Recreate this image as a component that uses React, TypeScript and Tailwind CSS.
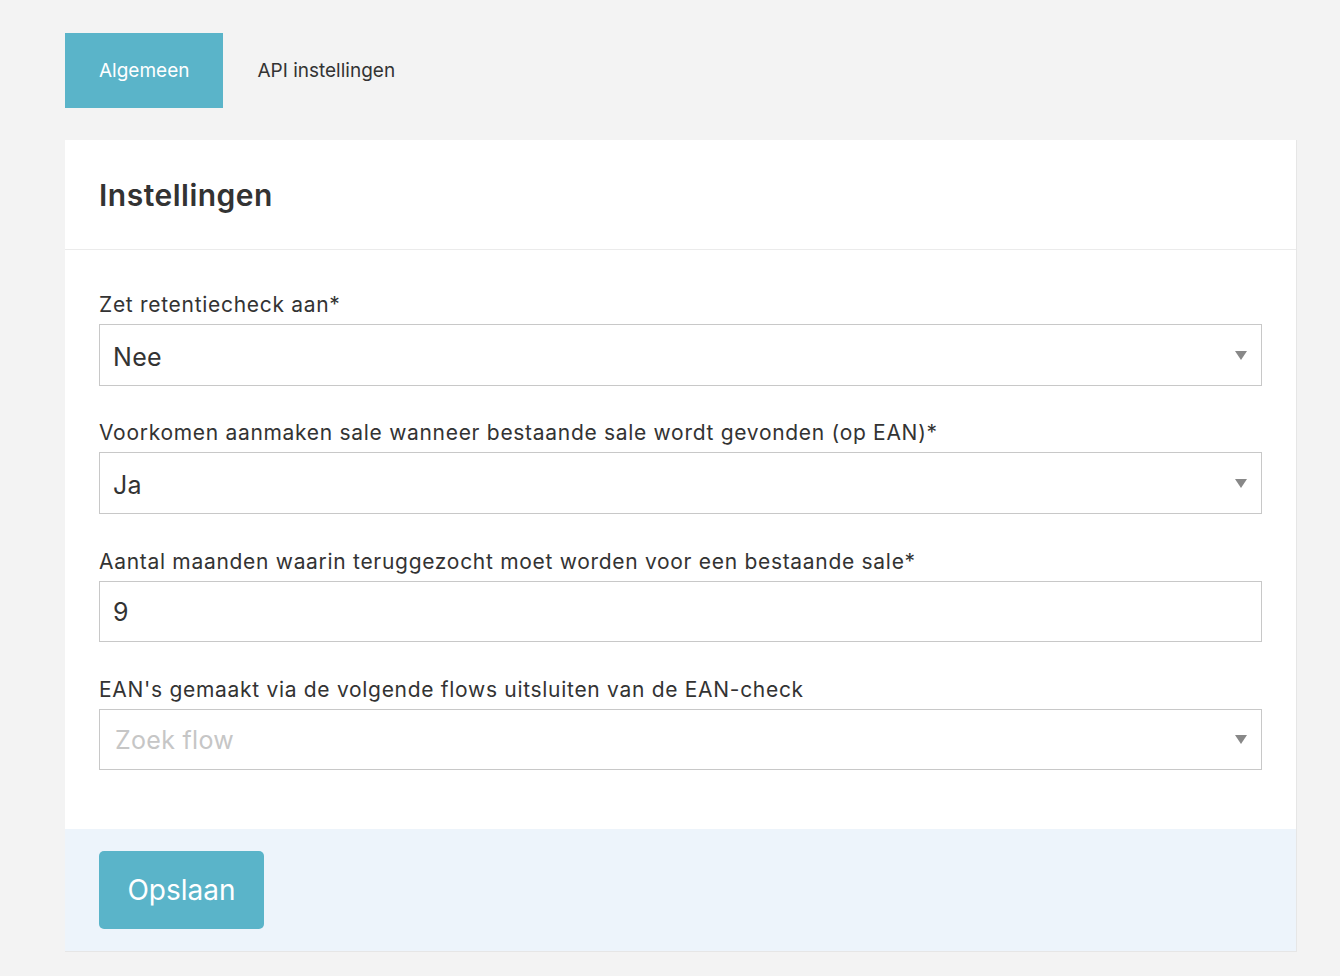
import { useState } from 'react'

const font = { fontFamily: 'Inter, "Noto Sans", sans-serif' }

function Caret() {
  return (
    <svg width="12" height="9" viewBox="0 0 12 9" className="shrink-0">
      <path d="M0 0 L12 0 L6 9 Z" fill="#888888" />
    </svg>
  )
}

function Field({ label, children }: { label: string; children: React.ReactNode }) {
  return (
    <div>
      <label className="block text-[21px] tracking-[0.7px] leading-[28px] text-[#333333] pt-[1px] mb-[5px]">{label}</label>
      {children}
    </div>
  )
}

function SelectBox({ value, placeholder, short = false }: { value?: string; placeholder?: string; short?: boolean }) {
  return (
    <div
      className={`${short ? 'h-[61px]' : 'h-[62px]'} border border-[#c8c8c8] bg-white flex items-center justify-between pl-[13px] pr-[14px]`}
    >
      {value ? (
        <span className="text-[25px] tracking-[0.3px] text-[#333333] pt-[5px]">{value}</span>
      ) : (
        <span className="text-[25px] tracking-[0.3px] text-[#c6c6c6] pl-[2px] pt-[3px]">{placeholder}</span>
      )}
      <Caret />
    </div>
  )
}

export default function App() {
  const [tab, setTab] = useState('algemeen')
  const [months, setMonths] = useState('9')

  return (
    <div className="min-h-[976px] bg-[#f3f3f3] pt-[33px] pl-[65px]" style={font}>
      {/* Tabs */}
      <div className="flex h-[75px]">
        <button
          onClick={() => setTab('algemeen')}
          className={`px-[34px] pt-[2px] text-[19px] ${tab === 'algemeen' ? 'bg-[#5ab4c9] text-white' : 'text-[#333333]'}`}
        >
          Algemeen
        </button>
        <button
          onClick={() => setTab('api')}
          className={`px-[34px] pt-[2px] text-[19px] ${tab === 'api' ? 'bg-[#5ab4c9] text-white' : 'text-[#333333]'}`}
        >
          API instellingen
        </button>
      </div>

      {/* Card */}
      <div className="mt-[32px] w-[1232px] bg-white border border-[#e6e6e6] border-l-0 border-t-0">
        <div className="h-[110px] px-[34px] flex items-center border-b border-[#ebebeb]">
          <h1 className="text-[30px] tracking-[0.5px] font-semibold text-[#333333] pt-[2px]">Instellingen</h1>
        </div>

        <div className="px-[34px] pt-[40px] pb-[59px] flex flex-col">
          <Field label="Zet retentiecheck aan*">
            <SelectBox value="Nee" />
          </Field>
          <div className="mt-[32px]">
            <Field label="Voorkomen aanmaken sale wanneer bestaande sale wordt gevonden (op EAN)*">
              <SelectBox value="Ja" />
            </Field>
          </div>
          <div className="mt-[33px]">
            <Field label="Aantal maanden waarin teruggezocht moet worden voor een bestaande sale*">
              <input
                value={months}
                onChange={(e) => setMonths(e.target.value)}
                className="block w-full h-[61px] border border-[#c8c8c8] px-[13px] pt-[1px] text-[25px] text-[#333333] outline-none"
              />
            </Field>
          </div>
          <div className="mt-[33px]">
            <Field label="EAN's gemaakt via de volgende flows uitsluiten van de EAN-check">
              <SelectBox placeholder="Zoek flow" short />
            </Field>
          </div>
        </div>

        <div className="bg-[#edf4fb] px-[34px] py-[22px]">
          <button className="w-[165px] h-[78px] rounded-[5px] bg-[#5ab4c9] text-white text-[28px]">
            Opslaan
          </button>
        </div>
      </div>
    </div>
  )
}
